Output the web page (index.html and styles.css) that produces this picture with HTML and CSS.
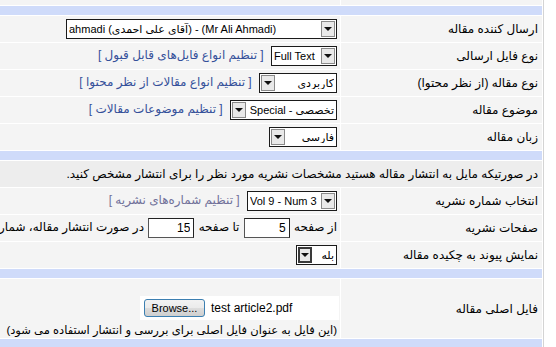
FILE: index.html
```html
<!DOCTYPE html>
<html lang="fa" dir="rtl">
<head>
    <meta charset="UTF-8">
    <title>ارسال مقاله</title>
    <link rel="stylesheet" href="styles.css">
</head>
<body>
    <div class="page">
        <table class="form">
            <colgroup>
                <col class="col-label">
                <col class="col-field">
            </colgroup>
            <tr class="tail"><td class="lbl"></td><td class="fld"></td></tr>
            <tr class="band"><td colspan="2"></td></tr>

            <tr>
                <td class="lbl">ارسال کننده مقاله</td>
                <td class="fld">
                    <span class="combo combo-author" dir="ltr">
                        <select><option>ahmadi (آقاي علي احمدي) - (Mr Ali Ahmadi)</option></select>
                        <span class="combo-btn"></span>
                    </span>
                </td>
            </tr>
            <tr>
                <td class="lbl">نوع فایل ارسالی</td>
                <td class="fld">
                    <span class="combo combo-type" dir="ltr">
                        <select><option>Full Text</option></select>
                        <span class="combo-btn"></span>
                    </span>
                    <a href="#" class="cfg">[ تنظیم انواع فایل‌های قابل قبول ]</a>
                </td>
            </tr>
            <tr>
                <td class="lbl">نوع مقاله (از نظر محتوا)</td>
                <td class="fld">
                    <span class="combo combo-kind">
                        <select><option>كاربردي</option></select>
                        <span class="combo-btn"></span>
                    </span>
                    <a href="#" class="cfg">[ تنظیم انواع مقالات از نظر محتوا ]</a>
                </td>
            </tr>
            <tr>
                <td class="lbl">موضوع مقاله</td>
                <td class="fld">
                    <span class="combo combo-subject">
                        <select><option>تخصصي - Special</option></select>
                        <span class="combo-btn"></span>
                    </span>
                    <a href="#" class="cfg">[ تنظیم موضوعات مقالات ]</a>
                </td>
            </tr>
            <tr>
                <td class="lbl">زبان مقاله</td>
                <td class="fld">
                    <span class="combo combo-lang">
                        <select><option>فارسی</option></select>
                        <span class="combo-btn"></span>
                    </span>
                </td>
            </tr>

            <tr class="band"><td colspan="2"></td></tr>

            <tr class="notice">
                <td colspan="2">در صورتیکه مایل به انتشار مقاله هستید مشخصات نشریه مورد نظر را برای انتشار مشخص کنید.</td>
            </tr>
            <tr>
                <td class="lbl">انتخاب شماره نشریه</td>
                <td class="fld">
                    <span class="combo combo-issue" dir="ltr">
                        <select><option>Vol 9 - Num 3</option></select>
                        <span class="combo-btn"></span>
                    </span>
                    <a href="#" class="cfg cfg-visited">[ تنظیم شماره‌های نشریه ]</a>
                </td>
            </tr>
            <tr>
                <td class="lbl">صفحات نشریه</td>
                <td class="fld">
                    از صفحه <input type="text" class="page-num" value="5">
                    تا صفحه <input type="text" class="page-num" value="15">
                    در صورت انتشار مقاله، شماره صفحات مقاله در نشریه را وارد کنید
                </td>
            </tr>
            <tr>
                <td class="lbl">نمایش پیوند به چکیده مقاله</td>
                <td class="fld">
                    <span class="combo combo-yes combo-focus">
                        <select><option>بله</option></select>
                        <span class="combo-btn"></span>
                    </span>
                </td>
            </tr>

            <tr class="band"><td colspan="2"></td></tr>

            <tr class="file-row">
                <td class="lbl">فایل اصلی مقاله</td>
                <td class="fld">
                    <div class="file" dir="ltr">
                        <button type="button" class="browse">Browse...</button>
                        <span class="file-name">test article2.pdf</span>
                    </div>
                    <div class="note">(این فایل به عنوان فایل اصلی برای بررسی و انتشار استفاده می شود)</div>
                </td>
            </tr>

            <tr class="band"><td colspan="2"></td></tr>
        </table>
    </div>
</body>
</html>
```

FILE: styles.css
```css
body {
    margin: 0;
    background: #fff;
    color: #000;
    font-family: 'Liberation Sans', 'DejaVu Sans', sans-serif;
    font-size: 12px;
}
.page {
    overflow: hidden;
    margin-right: 12px;
    padding-right: 1px;
    border-right: 1px solid #d4d4d4;
}
.form {
    width: 760px;
    table-layout: fixed;
    border-collapse: separate;
    border-spacing: 0;
}
.col-label {
    width: 202px;
}
.form td {
    background: #f4f4f4;
    border-bottom: 1px solid #fff;
    padding: 3px 4px;
    height: 20px;
    white-space: nowrap;
    vertical-align: middle;
}
.form td.fld {
    padding-right: 3px;
}
.form td.lbl {
    border-left: 1px solid #fff;
}
.form .tail td {
    height: 5px;
    padding: 0;
}
.form .band td {
    background: #cfdbfa;
    height: 9px;
    padding: 0;
}
.form .notice td {
    background: #ededed;
}
.form .file-row td.fld {
    padding-top: 17px;
    padding-bottom: 1px;
}

/* combo boxes */
.combo {
    display: inline-flex;
    vertical-align: middle;
    height: 20px;
    box-sizing: border-box;
    border: 1px solid #1a1a1a;
    background: #fff;
}
.combo select {
    flex: 1;
    min-width: 0;
    appearance: none;
    -webkit-appearance: none;
    border: none;
    background: transparent;
    font: 11px 'Liberation Sans', 'DejaVu Sans', sans-serif;
    color: #000;
    padding: 0 2px;
    height: 18px;
    outline: none;
}
.combo-btn {
    flex: none;
    width: 14px;
    margin: 1px;
    box-sizing: border-box;
    border: 1px solid #8a8a8a;
    background: #e9e9e9;
    display: flex;
    align-items: center;
    justify-content: center;
}
.combo-btn::after {
    content: "";
    border-left: 4px solid transparent;
    border-right: 4px solid transparent;
    border-top: 4px solid #111;
}
.combo-focus .combo-btn {
    border: 2px solid #3a3a3a;
}
.combo-author { width: 271px; }
.combo-type { width: 66px; }
.combo-kind { width: 78px; }
.combo-subject { width: 107px; }
.combo-lang { width: 68px; }
.combo-issue { width: 90px; }
.combo-issue select { padding: 0 0 0 2px; }
.combo-yes { width: 41px; }

.cfg {
    color: #34509a;
    text-decoration: none;
    margin-right: 4px;
}
.cfg-visited {
    color: #71719a;
}

.page-num {
    width: 46px;
    height: 20px;
    box-sizing: border-box;
    border: 1px solid #555;
    border-top-color: #222;
    border-right-color: #222;
    font: 12px 'Liberation Sans', 'DejaVu Sans', sans-serif;
    padding: 0 3px;
    vertical-align: middle;
    margin: 0 1px;
}

/* file picker */
.file {
    display: flex;
    align-items: center;
    width: 199px;
    height: 24px;
    background: #fff;
    margin-right: -2px;
    padding-left: 4px;
    box-sizing: border-box;
}
.browse {
    width: 61px;
    height: 18px;
    padding: 0;
    border: 1px solid #3c7fb1;
    border-radius: 3px;
    background: linear-gradient(#f2f2f2, #ebebeb 50%, #dddddd 50%, #cfcfcf);
    font: 11px 'Liberation Sans', sans-serif;
    color: #000;
}
.file-name {
    margin-left: 6px;
    font-size: 12px;
}
.note {
    margin-top: 3px;
    font-size: 11.5px;
    line-height: 14px;
}
```
